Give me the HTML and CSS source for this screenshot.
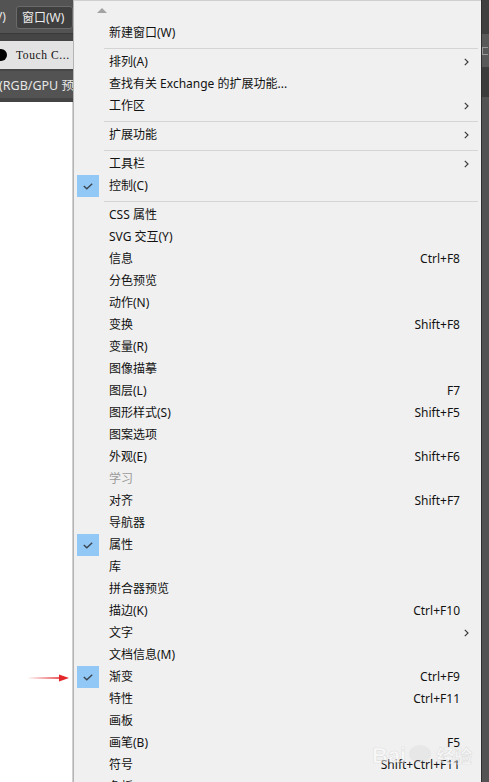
FILE: index.html
```html
<!DOCTYPE html>
<html lang="zh-CN">
<head>
<meta charset="utf-8">
<title>窗口菜单</title>
<link rel="stylesheet" href="styles.css">
</head>
<body>
<div class="screen">
  <aside class="left">
    <div class="topbar"><span class="cut">V)</span><span class="btn">窗口(W)</span></div>
    <div class="band"></div>
    <div class="tab"><span class="dot"></span><span class="tabtext">Touch C...</span></div>
    <div class="docbar"><span class="doctext">(RGB/GPU 预览)</span></div>
    <div class="docline"></div>
    <div class="canvas"></div>
  </aside>

  <nav class="menu">
    <div class="scroll-up"><span class="tri"></span></div>
    <div class="item"><span class="chk"></span><span class="label">新建窗口(W)</span><span class="key"></span><span class="sub"></span></div>
    <div class="sep"></div>
    <div class="item"><span class="chk"></span><span class="label">排列(A)</span><span class="key"></span><span class="sub"><svg class="chev" viewBox="0 0 5 8"><path d="M0.8 0.8 L4 4 L0.8 7.2"/></svg></span></div>
    <div class="item"><span class="chk"></span><span class="label">查找有关 Exchange 的扩展功能...</span><span class="key"></span><span class="sub"></span></div>
    <div class="item"><span class="chk"></span><span class="label">工作区</span><span class="key"></span><span class="sub"><svg class="chev" viewBox="0 0 5 8"><path d="M0.8 0.8 L4 4 L0.8 7.2"/></svg></span></div>
    <div class="sep"></div>
    <div class="item"><span class="chk"></span><span class="label">扩展功能</span><span class="key"></span><span class="sub"><svg class="chev" viewBox="0 0 5 8"><path d="M0.8 0.8 L4 4 L0.8 7.2"/></svg></span></div>
    <div class="sep"></div>
    <div class="item"><span class="chk"></span><span class="label">工具栏</span><span class="key"></span><span class="sub"><svg class="chev" viewBox="0 0 5 8"><path d="M0.8 0.8 L4 4 L0.8 7.2"/></svg></span></div>
    <div class="item"><span class="chk on"><svg class="tick" viewBox="0 0 10 7"><path d="M0.8 3 L3.8 5.8 L9.2 0.8"/></svg></span><span class="label">控制(C)</span><span class="key"></span><span class="sub"></span></div>
    <div class="sep"></div>
    <div class="item"><span class="chk"></span><span class="label">CSS 属性</span><span class="key"></span><span class="sub"></span></div>
    <div class="item"><span class="chk"></span><span class="label">SVG 交互(Y)</span><span class="key"></span><span class="sub"></span></div>
    <div class="item"><span class="chk"></span><span class="label">信息</span><span class="key">Ctrl+F8</span><span class="sub"></span></div>
    <div class="item"><span class="chk"></span><span class="label">分色预览</span><span class="key"></span><span class="sub"></span></div>
    <div class="item"><span class="chk"></span><span class="label">动作(N)</span><span class="key"></span><span class="sub"></span></div>
    <div class="item"><span class="chk"></span><span class="label">变换</span><span class="key">Shift+F8</span><span class="sub"></span></div>
    <div class="item"><span class="chk"></span><span class="label">变量(R)</span><span class="key"></span><span class="sub"></span></div>
    <div class="item"><span class="chk"></span><span class="label">图像描摹</span><span class="key"></span><span class="sub"></span></div>
    <div class="item"><span class="chk"></span><span class="label">图层(L)</span><span class="key">F7</span><span class="sub"></span></div>
    <div class="item"><span class="chk"></span><span class="label">图形样式(S)</span><span class="key">Shift+F5</span><span class="sub"></span></div>
    <div class="item"><span class="chk"></span><span class="label">图案选项</span><span class="key"></span><span class="sub"></span></div>
    <div class="item"><span class="chk"></span><span class="label">外观(E)</span><span class="key">Shift+F6</span><span class="sub"></span></div>
    <div class="item disabled"><span class="chk"></span><span class="label">学习</span><span class="key"></span><span class="sub"></span></div>
    <div class="item"><span class="chk"></span><span class="label">对齐</span><span class="key">Shift+F7</span><span class="sub"></span></div>
    <div class="item"><span class="chk"></span><span class="label">导航器</span><span class="key"></span><span class="sub"></span></div>
    <div class="item"><span class="chk on"><svg class="tick" viewBox="0 0 10 7"><path d="M0.8 3 L3.8 5.8 L9.2 0.8"/></svg></span><span class="label">属性</span><span class="key"></span><span class="sub"></span></div>
    <div class="item"><span class="chk"></span><span class="label">库</span><span class="key"></span><span class="sub"></span></div>
    <div class="item"><span class="chk"></span><span class="label">拼合器预览</span><span class="key"></span><span class="sub"></span></div>
    <div class="item"><span class="chk"></span><span class="label">描边(K)</span><span class="key">Ctrl+F10</span><span class="sub"></span></div>
    <div class="item"><span class="chk"></span><span class="label">文字</span><span class="key"></span><span class="sub"><svg class="chev" viewBox="0 0 5 8"><path d="M0.8 0.8 L4 4 L0.8 7.2"/></svg></span></div>
    <div class="item"><span class="chk"></span><span class="label">文档信息(M)</span><span class="key"></span><span class="sub"></span></div>
    <div class="item"><span class="chk on"><svg class="tick" viewBox="0 0 10 7"><path d="M0.8 3 L3.8 5.8 L9.2 0.8"/></svg></span><span class="label">渐变</span><span class="key">Ctrl+F9</span><span class="sub"></span></div>
    <div class="item"><span class="chk"></span><span class="label">特性</span><span class="key">Ctrl+F11</span><span class="sub"></span></div>
    <div class="item"><span class="chk"></span><span class="label">画板</span><span class="key"></span><span class="sub"></span></div>
    <div class="item"><span class="chk"></span><span class="label">画笔(B)</span><span class="key">F5</span><span class="sub"></span></div>
    <div class="item"><span class="chk"></span><span class="label">符号</span><span class="key">Shift+Ctrl+F11</span><span class="sub"></span></div>
    <div class="item"><span class="chk"></span><span class="label">色板</span><span class="key"></span><span class="sub"></span></div>
  </nav>

  <div class="rstrip">
    <div class="r1"></div>
    <div class="r2"><span class="ricon"></span></div>
    <div class="r3"></div>
    <div class="r4"></div>
  </div>

  <svg class="annot-arrow" viewBox="0 0 44 10" width="44" height="10">
    <path d="M1 5 L34 4.3 L34 5.7 Z" fill="#e3262a"/>
    <path d="M33 1.5 L43 5 L33 8.5 Z" fill="#e3262a"/>
  </svg>

  <div class="watermark"><span class="wm-bai">Bai</span><span class="wm-paw"></span><span class="wm-jy">经验</span></div>
</div>
</body>
</html>
```

FILE: styles.css
```css
* { box-sizing: border-box; }
html, body {
  margin: 0;
  padding: 0;
  width: 489px;
  height: 782px;
  overflow: hidden;
  background: #ffffff;
}
.screen {
  position: relative;
  display: flex;
  width: 489px;
  height: 782px;
  overflow: hidden;
  font-family: "Noto Sans", "Noto Sans CJK SC", sans-serif;
  font-size: 12px;
}

/* left application area */
.left {
  width: 73px;
  flex: none;
  display: flex;
  flex-direction: column;
  overflow: hidden;
  background: #ffffff;
}
.topbar {
  height: 33px;
  background: #535353;
  display: flex;
  align-items: center;
  padding-top: 1px;
  white-space: nowrap;
}
.cut {
  color: #e6e6e6;
  margin-left: -5px;
  width: 21px;
  flex: none;
  line-height: 16px;
}
.btn {
  flex: none;
  height: 23px;
  padding: 0 8px 0 5px;
  background: #3f3f3f;
  border: 1px solid #6a6a6a;
  border-radius: 3px;
  color: #ececec;
  line-height: 21px;
}
.band {
  height: 8px;
  background: #454545;
  border-top: 1px solid #3a3a3a;
}
.tab {
  height: 28px;
  background: #e3e3e3;
  display: flex;
  align-items: center;
  white-space: nowrap;
}
.dot {
  flex: none;
  width: 12px;
  height: 12px;
  border-radius: 50%;
  background: #000;
  margin-left: -5px;
}
.tabtext {
  margin-left: 9px;
  font-family: "Liberation Serif", "Noto Sans CJK SC", serif;
  font-size: 11.5px;
  color: #111;
  letter-spacing: 0.6px;
}
.docbar {
  height: 29px;
  background: #535353;
  border-top: 2px solid #474747;
  display: flex;
  align-items: center;
  white-space: nowrap;
}
.doctext {
  color: #e6e6e6;
  font-size: 12.5px;
  margin-left: -1px;
}
.docline {
  height: 4px;
  background: #444;
}
.canvas {
  flex: 1;
  background: #ffffff;
  border-right: 1px solid #d0d0d0;
}

/* menu */
.menu {
  width: 408px;
  flex: none;
  background: #f0f0f0;
  border-left: 1px solid #b4b4b4;
  border-top: 1px solid #cfcfcf;
  overflow: hidden;
  color: #121212;
}
.scroll-up {
  height: 21px;
  display: flex;
  align-items: center;
  padding-left: 23px;
  padding-bottom: 2px;
}
.tri {
  width: 0;
  height: 0;
  border-left: 5.5px solid transparent;
  border-right: 5.5px solid transparent;
  border-bottom: 5.5px solid #a3a3a3;
}
.item {
  height: 22px;
  display: flex;
  align-items: center;
  padding-left: 3px;
  line-height: 22px;
  white-space: nowrap;
}
.chk {
  flex: none;
  width: 22px;
  height: 22px;
  margin-right: 10px;
  display: flex;
  align-items: center;
  justify-content: center;
}
.chk.on { background: #91c8f6; }
.tick {
  width: 10px;
  height: 7px;
  fill: none;
  stroke: #3b4550;
  stroke-width: 1.4;
}
.label { flex: 1; }
.key { flex: none; text-align: right; }
.sub {
  flex: none;
  width: 21px;
  height: 22px;
  display: flex;
  align-items: center;
  padding-left: 4px;
}
.chev {
  width: 5px;
  height: 8px;
  fill: none;
  stroke: #3c3c3c;
  stroke-width: 1.2;
}
.disabled { color: #9a9a9a; }
.sep {
  height: 7px;
  display: flex;
  align-items: center;
  padding-left: 30px;
  padding-right: 3px;
}
.sep::before {
  content: "";
  flex: 1;
  height: 1px;
  margin-top: 1px;
  background: #d4d4d4;
}

/* right strip (app panel behind) */
.rstrip {
  width: 8px;
  flex: none;
  display: flex;
  flex-direction: column;
  border-left: 1px solid #2f2f2f;
  background: #535353;
}
.r1 { height: 34px; background: #404040; }
.r2 {
  height: 33px;
  background: #595959;
  display: flex;
  align-items: center;
}
.ricon {
  width: 6px;
  height: 8px;
  border: 1px solid #9a9a9a;
  border-right: none;
}
.r3 { height: 30px; background: #3c3c3c; }
.r4 { flex: 1; background: #535353; }

/* overlays */
.annot-arrow {
  position: absolute;
  left: 26px;
  top: 673px;
}
.watermark {
  position: absolute;
  left: 372px;
  top: 742px;
  display: flex;
  align-items: baseline;
  font-family: "Liberation Sans", "Noto Sans CJK SC", sans-serif;
  font-weight: bold;
  font-size: 22px;
  color: rgba(255, 255, 255, 0.5);
  -webkit-text-stroke: 0.6px rgba(170, 170, 170, 0.3);
  pointer-events: none;
}
.wm-paw {
  width: 22px;
  height: 18px;
  border-radius: 50%;
  background: rgba(200, 200, 200, 0.22);
  margin: 0 3px;
}
.wm-jy { font-size: 18px; margin-left: 2px; }
```
